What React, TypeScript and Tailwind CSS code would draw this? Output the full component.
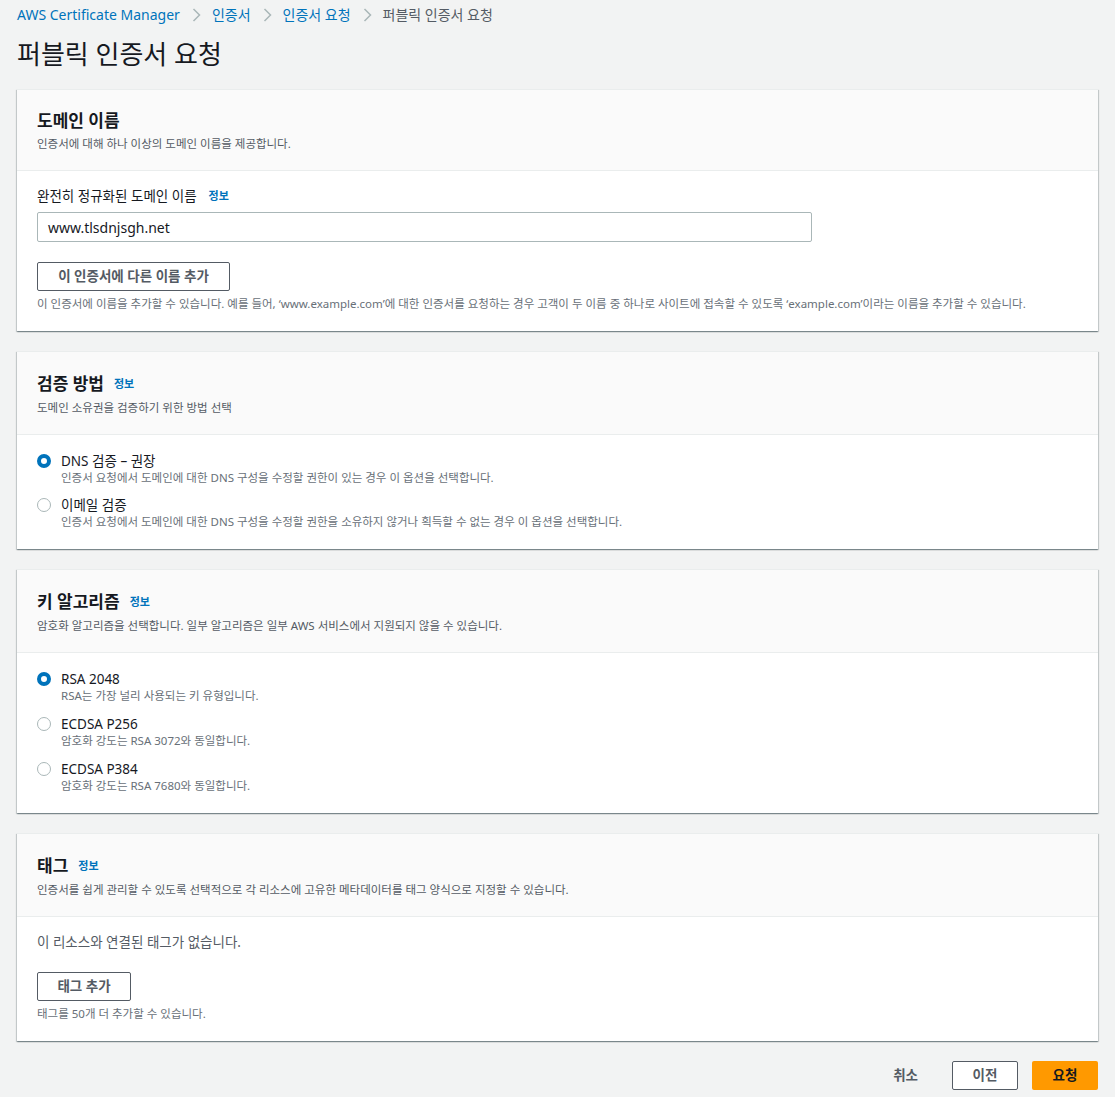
import React from "react"

const font = { fontFamily: '"Noto Sans", "Noto Sans CJK KR", sans-serif' }

function Chevron() {
  return (
    <svg width="16" height="16" viewBox="0 0 16 16" className="mx-[8px]">
      <path d="M5.5 2l6 6-6 6" fill="none" stroke="#aab7b8" strokeWidth="1.5" />
    </svg>
  )
}

function Info() {
  return <span className="text-[11px] font-bold leading-[16px] text-[#0073bb]">정보</span>
}

function Radio({ checked }: { checked?: boolean }) {
  return checked ? (
    <span className="mt-[2px] h-[14px] w-[14px] shrink-0 rounded-full border-[4px] border-[#0073bb] bg-white" />
  ) : (
    <span className="mt-[2px] h-[14px] w-[14px] shrink-0 rounded-full border border-[#aab7b8] bg-white" />
  )
}

function Card({ title, info, desc, children }: { title: string; info?: boolean; desc: string; children: React.ReactNode }) {
  return (
    <div className="bg-white shadow-[0_1px_1px_0_rgba(0,28,36,0.3),1px_1px_1px_0_rgba(0,28,36,0.15),-1px_1px_1px_0_rgba(0,28,36,0.15)] border-t border-[#eaeded]">
      <div className="bg-[#fafafa] border-b border-[#eaeded] px-[20px] pt-[20px] pb-[18px]">
        <div className={info ? "flex items-center gap-[10px] h-[24px]" : "flex items-center gap-[10px] h-[22px]"}>
          <h2 className="text-[17px] font-bold leading-[22px] text-[#16191f]">{title}</h2>
          {info && <Info />}
        </div>
        <p className="mt-[4px] text-[11.5px] leading-[16px] text-[#545b64]">{desc}</p>
      </div>
      <div className="px-[20px] pt-[15px] pb-[19px]">{children}</div>
    </div>
  )
}

function Option({ checked, label, desc }: { checked?: boolean; label: string; desc: string }) {
  return (
    <div className="flex gap-[10px]">
      <Radio checked={checked} />
      <div>
        <div className="text-[13.5px] leading-[18px] text-[#16191f]">{label}</div>
        <div className="text-[11.5px] leading-[16px] text-[#687078]">{desc}</div>
      </div>
    </div>
  )
}

export default function App() {
  return (
    <div style={font} className="min-h-[1097px] bg-[#f2f3f3] px-[17px] pb-[8px]">
      <nav className="flex items-center pt-[5px] text-[14px] leading-[20px]">
        <span className="text-[#0073bb]">AWS Certificate Manager</span>
        <Chevron />
        <span className="text-[#0073bb]">인증서</span>
        <Chevron />
        <span className="text-[#0073bb]">인증서 요청</span>
        <Chevron />
        <span className="text-[#545b64]">퍼블릭 인증서 요청</span>
      </nav>
      <h1 className="mt-[11px] text-[26px] leading-[36px] text-[#16191f]">퍼블릭 인증서 요청</h1>

      <div className="mt-[17px] flex flex-col gap-[20px]">
        <Card title="도메인 이름" desc="인증서에 대해 하나 이상의 도메인 이름을 제공합니다.">
          <div className="flex items-center gap-[12px] text-[13.5px] leading-[20px] text-[#16191f]">
            완전히 정규화된 도메인 이름 <Info />
          </div>
          <div className="mt-[6px] w-[775px] h-[30px] border border-[#aab7b8] rounded-[2px] px-[10px] flex items-center text-[14px] text-[#16191f]">
            www.tlsdnjsgh.net
          </div>
          <button className="mt-[20px] h-[29px] w-[193px] border border-[#545b64] rounded-[2px] text-[13.5px] font-bold text-[#545b64]">
            이 인증서에 다른 이름 추가
          </button>
          <p className="mt-[5px] text-[11.5px] leading-[16px] text-[#687078]">
            이 인증서에 이름을 추가할 수 있습니다. 예를 들어, ‘www.example.com’에 대한 인증서를 요청하는 경우 고객이 두 이름 중 하나로 사이트에 접속할 수 있도록 ‘example.com’이라는 이름을 추가할 수 있습니다.
          </p>
        </Card>

        <Card title="검증 방법" info desc="도메인 소유권을 검증하기 위한 방법 선택">
          <div className="flex flex-col gap-[10px] pt-[2px]">
            <Option checked label="DNS 검증 – 권장" desc="인증서 요청에서 도메인에 대한 DNS 구성을 수정할 권한이 있는 경우 이 옵션을 선택합니다." />
            <Option label="이메일 검증" desc="인증서 요청에서 도메인에 대한 DNS 구성을 수정할 권한을 소유하지 않거나 획득할 수 없는 경우 이 옵션을 선택합니다." />
          </div>
        </Card>

        <Card title="키 알고리즘" info desc="암호화 알고리즘을 선택합니다. 일부 알고리즘은 일부 AWS 서비스에서 지원되지 않을 수 있습니다.">
          <div className="flex flex-col gap-[11px] pt-[2px]">
            <Option checked label="RSA 2048" desc="RSA는 가장 널리 사용되는 키 유형입니다." />
            <Option label="ECDSA P256" desc="암호화 강도는 RSA 3072와 동일합니다." />
            <Option label="ECDSA P384" desc="암호화 강도는 RSA 7680와 동일합니다." />
          </div>
        </Card>

        <Card title="태그" info desc="인증서를 쉽게 관리할 수 있도록 선택적으로 각 리소스에 고유한 메타데이터를 태그 양식으로 지정할 수 있습니다.">
          <p className="text-[13.5px] leading-[20px] text-[#545b64]">이 리소스와 연결된 태그가 없습니다.</p>
          <button className="mt-[20px] h-[29px] w-[94px] border border-[#545b64] rounded-[2px] text-[13.5px] font-bold text-[#545b64]">
            태그 추가
          </button>
          <p className="mt-[5px] text-[11.5px] leading-[16px] text-[#687078]">태그를 50개 더 추가할 수 있습니다.</p>
        </Card>
      </div>

      <div className="mt-[20px] flex items-center justify-end gap-[14px] text-[13.5px] font-bold">
        <button className="px-[20px] h-[29px] text-[#545b64]">취소</button>
        <button className="h-[29px] w-[66px] border border-[#545b64] rounded-[2px] bg-white text-[#545b64]">이전</button>
        <button className="h-[29px] w-[66px] rounded-[2px] bg-[#ff9900] text-[#16191f]">요청</button>
      </div>
    </div>
  )
}
